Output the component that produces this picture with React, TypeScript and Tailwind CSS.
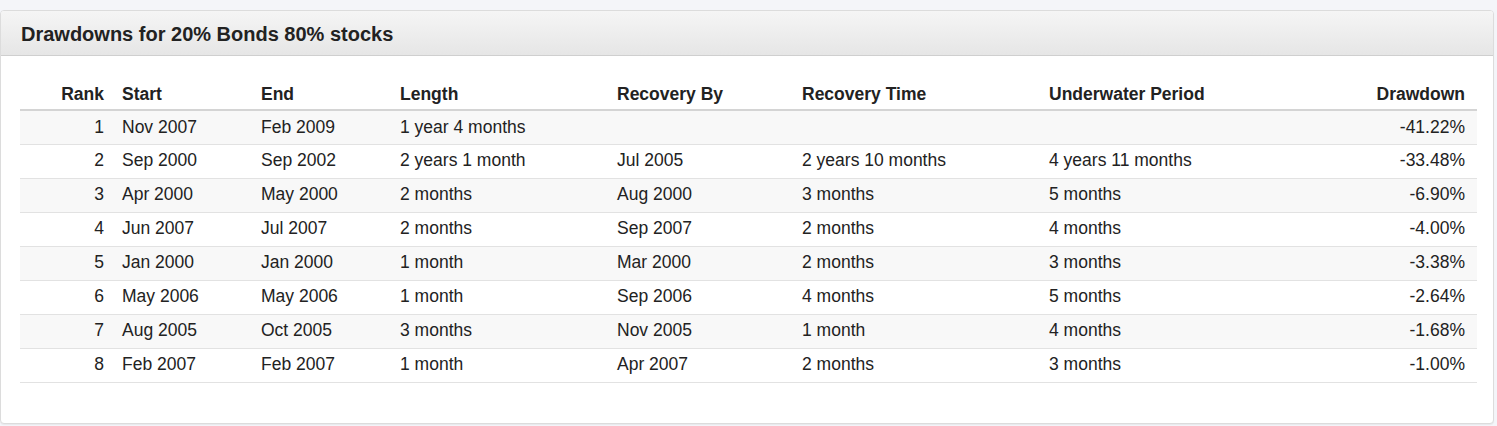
const rows = [
  ['1', 'Nov 2007', 'Feb 2009', '1 year 4 months', '', '', '', '-41.22%'],
  ['2', 'Sep 2000', 'Sep 2002', '2 years 1 month', 'Jul 2005', '2 years 10 months', '4 years 11 months', '-33.48%'],
  ['3', 'Apr 2000', 'May 2000', '2 months', 'Aug 2000', '3 months', '5 months', '-6.90%'],
  ['4', 'Jun 2007', 'Jul 2007', '2 months', 'Sep 2007', '2 months', '4 months', '-4.00%'],
  ['5', 'Jan 2000', 'Jan 2000', '1 month', 'Mar 2000', '2 months', '3 months', '-3.38%'],
  ['6', 'May 2006', 'May 2006', '1 month', 'Sep 2006', '4 months', '5 months', '-2.64%'],
  ['7', 'Aug 2005', 'Oct 2005', '3 months', 'Nov 2005', '1 month', '4 months', '-1.68%'],
  ['8', 'Feb 2007', 'Feb 2007', '1 month', 'Apr 2007', '2 months', '3 months', '-1.00%'],
]

const headers = ['Rank', 'Start', 'End', 'Length', 'Recovery By', 'Recovery Time', 'Underwater Period', 'Drawdown']
const widths = ['w-[94px]', 'w-[139px]', 'w-[139px]', 'w-[217px]', 'w-[185px]', 'w-[247px]', 'w-[220px]', 'w-[216px]']

function cellClass(i: number) {
  if (i === 0) return 'pl-2 pr-[10px] text-right'
  if (i === 7) return 'pl-2 pr-3 text-right'
  return 'px-2 text-left'
}

export default function App() {
  return (
    <div className="min-h-[426px] bg-[#f4f5f9] pt-[10px] pr-[3px] font-['Liberation_Sans',Arial,sans-serif] text-[#333]">
      <div className="overflow-hidden rounded-[4px] border border-[#dcdcdc] bg-white shadow-[0_1px_1px_rgba(0,0,0,0.05)]">
        <div className="flex h-[45px] items-center border-b border-[#cfcfcf] bg-gradient-to-b from-[#f5f5f5] to-[#e6e6e6] px-5 pt-[1px]">
          <h3 className="text-[20px] font-bold text-[#222]">Drawdowns for 20% Bonds 80% stocks</h3>
        </div>
        <div className="pl-[19px] pr-[19px] pt-[19px] pb-10">
          <table className="w-full table-fixed border-collapse text-[17.5px]">
            <thead>
              <tr className="border-b-2 border-[#d4d4d4]">
                {headers.map((h, i) => (
                  <th key={h} className={`${widths[i]} ${cellClass(i)} h-[35px] pb-[2px] align-bottom font-bold text-[#222]`}>
                    {h}
                  </th>
                ))}
              </tr>
            </thead>
            <tbody>
              {rows.map((r, ri) => (
                <tr key={ri} className={`border-b border-[#e2e2e2] ${ri % 2 === 0 ? 'bg-[#f8f8f8]' : 'bg-white'}`}>
                  {r.map((c, i) => (
                    <td key={i} className={`${cellClass(i)} h-[34px] align-middle leading-none text-[#222]`}>
                      {c}
                    </td>
                  ))}
                </tr>
              ))}
            </tbody>
          </table>
        </div>
      </div>
    </div>
  )
}
